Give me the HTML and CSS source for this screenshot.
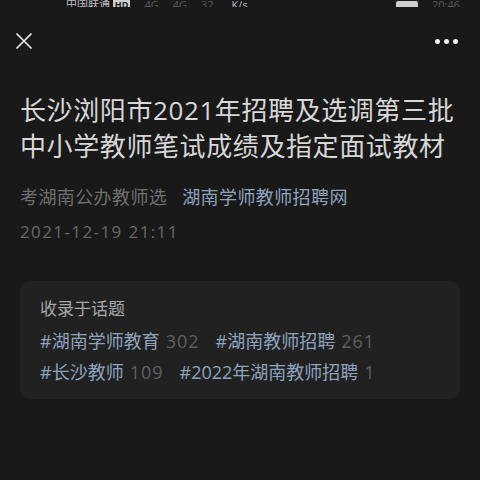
FILE: index.html
```html
<!DOCTYPE html>
<html lang="zh-CN">
<head>
    <meta charset="UTF-8">
    <meta name="viewport" content="width=device-width, initial-scale=1.0">
    <title>长沙浏阳市2021年招聘及选调第三批中小学教师笔试成绩及指定面试教材</title>
    <link rel="stylesheet" href="styles.css">
</head>
<body>
    <div class="status-bar">
        <span class="carrier">中国联通 <b class="hd">HD</b></span>
        <span class="signal">4G</span>
        <span class="signal">4G</span>
        <span class="signal">32</span>
        <span class="speed">K/s</span>
        <span class="spacer"></span>
        <span class="battery"></span>
        <span class="signal">20:46</span>
    </div>

    <div class="nav">
        <svg class="close" width="18" height="18" viewBox="0 0 18 18">
            <path d="M1.5 1.5 L16.5 16.5 M16.5 1.5 L1.5 16.5" stroke="#f2f2f2" stroke-width="1.6" fill="none"/>
        </svg>
        <div class="more">
            <span></span><span></span><span></span>
        </div>
    </div>

    <div class="article">
        <h1 class="title">长沙浏阳市2021年招聘及选调第三批中小学教师笔试成绩及指定面试教材</h1>
        <div class="meta">
            <span class="author">考湖南公办教师选</span>
            <span class="account">湖南学师教师招聘网</span>
        </div>
        <div class="date">2021-12-19 21:11</div>

        <div class="topics">
            <div class="topics-head">收录于话题</div>
            <div class="tag-row">
                <span class="tag">#湖南学师教育<i>302</i></span>
                <span class="tag">#湖南教师招聘<i>261</i></span>
            </div>
            <div class="tag-row">
                <span class="tag">#长沙教师<i>109</i></span>
                <span class="tag">#2022年湖南教师招聘<i>1</i></span>
            </div>
        </div>
    </div>
</body>
</html>
```

FILE: styles.css
```css
body {
    margin: 0;
    background-color: #191919;
    font-family: "Open Sans", "Noto Sans CJK SC", sans-serif;
    color: #d6d6d6;
}

.status-bar {
    height: 7px;
    overflow: hidden;
    display: flex;
    align-items: flex-end;
    padding: 0 20px 0 66px;
    gap: 14px;
    font-size: 11px;
    color: #bdbdbd;
}
.status-bar span {
    line-height: 11px;
    margin-bottom: -3px;
}
.status-bar .signal {
    color: #5a5a5a;
}
.status-bar .speed {
    margin-left: 4px;
}
.status-bar .spacer {
    flex: 1;
}
.status-bar .battery {
    width: 22px;
    height: 9px;
    background: #cfcfcf;
    border-radius: 2px;
}
.hd {
    background: #cfcfcf;
    color: #191919;
    font-size: 9px;
    padding: 0 2px;
    border-radius: 2px;
}

.nav {
    height: 50px;
    display: flex;
    justify-content: space-between;
    align-items: center;
    padding: 0 22px 0 15px;
    margin-top: 9px;
}
.more {
    display: flex;
    gap: 4px;
}
.more span {
    width: 5px;
    height: 5px;
    border-radius: 50%;
    background: #f2f2f2;
}

.article {
    padding: 0 20px;
}
.title {
    margin: 26px 0 0;
    font-size: 26px;
    font-weight: normal;
    line-height: 36px;
    letter-spacing: 0.6px;
    color: #d7d7d7;
}
.meta {
    margin-top: 20px;
    font-size: 18px;
    line-height: 26px;
    letter-spacing: 0.4px;
    display: flex;
    gap: 15px;
}
.author {
    color: #6f6f6f;
}
.account {
    color: #8ea3bf;
}
.date {
    margin-top: 10px;
    font-size: 17px;
    line-height: 24px;
    letter-spacing: 1.4px;
    color: #676767;
}

.topics {
    margin-top: 37px;
    background: #212121;
    border-radius: 9px;
    padding: 13px 20px 11px;
}
.topics-head {
    font-size: 17px;
    line-height: 30px;
    margin-bottom: 2px;
    color: #a8a8a8;
}
.tag-row {
    display: flex;
    gap: 16px;
    font-size: 18px;
    line-height: 31px;
}
.tag {
    color: #8ea3bf;
}
.tag i {
    font-style: normal;
    color: #5f5f5f;
    margin-left: 6px;
    letter-spacing: 1px;
}
```
